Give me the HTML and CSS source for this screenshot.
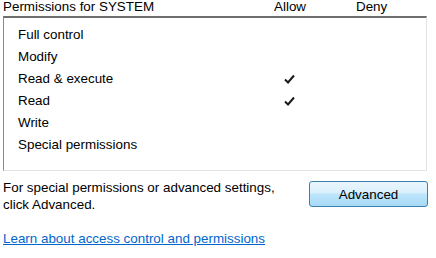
FILE: index.html
```html
<!DOCTYPE html>
<html>
<head>
<meta charset="utf-8">
<link rel="stylesheet" href="styles.css">
</head>
<body>
<div class="panel">
  <div class="header">
    <span class="h-name">Permissions for SYSTEM</span>
    <span class="h-allow">Allow</span>
    <span class="h-deny">Deny</span>
  </div>
  <div class="list">
    <div class="row"><span class="name">Full control</span><span class="allow"></span><span class="deny"></span></div>
    <div class="row"><span class="name">Modify</span><span class="allow"></span><span class="deny"></span></div>
    <div class="row"><span class="name">Read &amp; execute</span><span class="allow"><svg class="check" width="11" height="10" viewBox="0 0 11 10"><path d="M1 5.5 L4 8.5 L10 1.5" fill="none" stroke="#1a1a1a" stroke-width="2"/></svg></span><span class="deny"></span></div>
    <div class="row"><span class="name">Read</span><span class="allow"><svg class="check" width="11" height="10" viewBox="0 0 11 10"><path d="M1 5.5 L4 8.5 L10 1.5" fill="none" stroke="#1a1a1a" stroke-width="2"/></svg></span><span class="deny"></span></div>
    <div class="row"><span class="name">Write</span><span class="allow"></span><span class="deny"></span></div>
    <div class="row"><span class="name">Special permissions</span><span class="allow"></span><span class="deny"></span></div>
  </div>
  <div class="advanced">
    <div class="adv-text">For special permissions or advanced settings,<br>click Advanced.</div>
    <button class="adv-btn">Advanced</button>
  </div>
  <a class="link" href="#">Learn about access control and permissions</a>
</div>
</body>
</html>
```
FILE: styles.css
```css
html, body {
  margin: 0;
  padding: 0;
  background: #ffffff;
}
body {
  font-family: "Liberation Sans", Arial, sans-serif;
  font-size: 13.4px;
  color: #000;
}
.panel {
  width: 436px;
  height: 258px;
  padding: 0 9px 0 3px;
  box-sizing: border-box;
  display: flex;
  flex-direction: column;
}
.header {
  display: flex;
  height: 17px;
  line-height: 15px;
  margin-top: -1px;
}
.h-name { width: 271px; }
.h-allow { width: 82px; }
.h-deny { flex: 1; }
.list {
  height: 155px;
  border-top: 2px solid #6e6e6e;
  border-left: 1px solid #8a8a8a;
  border-right: 1px solid #e3e3e3;
  border-bottom: 1px solid #e3e3e3;
  box-sizing: border-box;
  padding-top: 6px;
}
.row {
  display: flex;
  height: 22px;
  line-height: 22px;
  align-items: center;
}
.name {
  width: 271px;
  padding-left: 14px;
  box-sizing: border-box;
}
.allow {
  width: 60px;
  display: flex;
  align-items: center;
  padding-left: 9px;
  box-sizing: border-box;
}
.deny { flex: 1; }
.advanced {
  display: flex;
  justify-content: space-between;
  margin-top: 8px;
}
.adv-text {
  line-height: 17px;
}
.adv-btn {
  width: 119px;
  height: 26px;
  margin-top: 2px;
  margin-right: -1px;
  border: 1px solid #3c7fb1;
  border-radius: 3px;
  background: linear-gradient(#eaf6fd 0%, #d9f0fc 45%, #bee6fd 50%, #a7d9f5 100%);
  font-family: "Liberation Sans", Arial, sans-serif;
  font-size: 13.4px;
  color: #000;
  padding: 0;
}
.link {
  margin-top: 17px;
  color: #0066cc;
  text-decoration: underline;
  line-height: 17px;
  align-self: flex-start;
}
```
